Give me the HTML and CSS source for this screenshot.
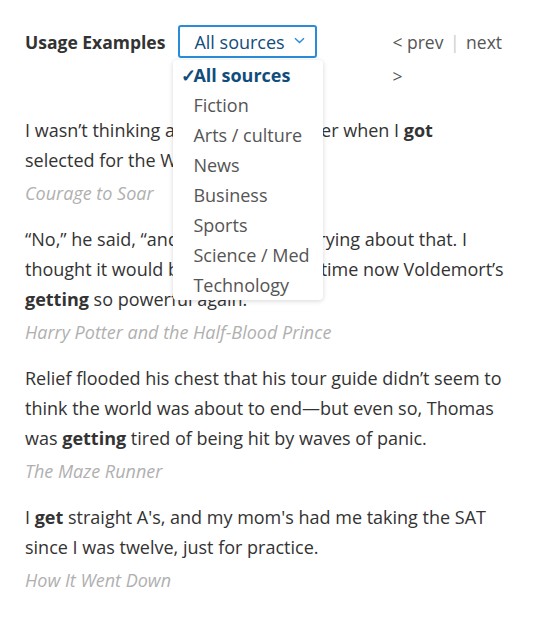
FILE: index.html
```html
<!DOCTYPE html>
<html lang="en">
<head>
<meta charset="utf-8">
<title>Usage Examples</title>
<link rel="stylesheet" href="styles.css">
</head>
<body>
<div class="page">
  <div class="header">
    <h2 class="title">Usage Examples</h2>
    <div class="picker">
      <div class="select">
        <span class="select-label">All sources</span>
        <svg class="chevron" width="11" height="7" viewBox="0 0 11 7"><path d="M1 1.2 L5.5 5.5 L10 1.2" fill="none" stroke="#2a8bd8" stroke-width="1.4"/></svg>
      </div>
      <ul class="menu">
        <li class="item selected"><span class="check">✓</span>All sources</li>
        <li class="item">Fiction</li>
        <li class="item">Arts / culture</li>
        <li class="item">News</li>
        <li class="item">Business</li>
        <li class="item">Sports</li>
        <li class="item">Science / Med</li>
        <li class="item">Technology</li>
      </ul>
    </div>
    <div class="pager">&lt; prev <span class="sep">|</span> next &gt;</div>
  </div>

  <div class="examples">
    <div class="example">
      <p class="quote">I wasn’t thinking about an elite career when I <b>got</b> selected for the World team.</p>
      <p class="cite">Courage to Soar</p>
    </div>
    <div class="example">
      <p class="quote">“No,” he said, “and I wasn’t just worrying about that. I thought it would be even safer this time now Voldemort’s <b>getting</b> so powerful again.</p>
      <p class="cite">Harry Potter and the Half-Blood Prince</p>
    </div>
    <div class="example">
      <p class="quote">Relief flooded his chest that his tour guide didn’t seem to think the world was about to end—but even so, Thomas was <b>getting</b> tired of being hit by waves of panic.</p>
      <p class="cite">The Maze Runner</p>
    </div>
    <div class="example">
      <p class="quote">I <b>get</b> straight A's, and my mom's had me taking the SAT since I was twelve, just for practice.</p>
      <p class="cite">How It Went Down</p>
    </div>
  </div>
</div>
</body>
</html>
```

FILE: styles.css
```css
* { box-sizing: border-box; }

html, body {
  margin: 0;
  padding: 0;
  background: #ffffff;
}

body {
  font-family: "Open Sans", "Noto Sans", sans-serif;
  color: #333333;
}

.page {
  padding: 25px 29px 0 25px;
  width: 534px;
}

.header {
  display: flex;
  align-items: flex-start;
}

.title {
  margin: 0;
  font-size: 17.5px;
  font-weight: 700;
  line-height: 34px;
  color: #333333;
  white-space: nowrap;
}

.picker {
  position: relative;
  margin-left: 13px;
}

.select {
  width: 139px;
  height: 33px;
  border: 2px solid #2a8bd8;
  border-radius: 3px;
  display: flex;
  align-items: center;
  padding-left: 14px;
  padding-right: 10px;
}

.select-label {
  font-size: 18px;
  color: #114d7c;
  flex: 1;
  line-height: 28px;
}

.chevron {
  display: block;
  margin-top: -3px;
}

.menu {
  position: absolute;
  top: 35px;
  left: -5px;
  width: 150px;
  margin: 0;
  padding: 0;
  list-style: none;
  background: #ffffff;
  border-radius: 4px;
  box-shadow: 0 1px 5px rgba(0, 0, 0, 0.16);
  z-index: 10;
}

.item {
  font-size: 18px;
  line-height: 30px;
  height: 30px;
  padding-left: 20px;
  color: #555555;
  white-space: nowrap;
}

.item.selected {
  font-weight: 700;
  color: #114d7c;
  padding-left: 8px;
}

.check {
  display: inline-block;
  width: 12px;
}

.pager {
  margin-left: 75px;
  width: 112px;
  font-size: 17.5px;
  line-height: 34px;
  color: #555555;
}

.sep {
  color: #cccccc;
  margin: 0 2px;
}

.examples {
  margin-top: 22px;
}

.example {
  margin-bottom: 16px;
}

.quote {
  margin: 0;
  font-size: 18px;
  line-height: 30px;
  color: #333333;
}

.quote b {
  font-weight: 700;
  color: #333333;
}

.cite {
  margin: 3px 0 0 0;
  font-size: 18px;
  line-height: 30px;
  font-style: italic;
  color: #b0b0b0;
}
```
